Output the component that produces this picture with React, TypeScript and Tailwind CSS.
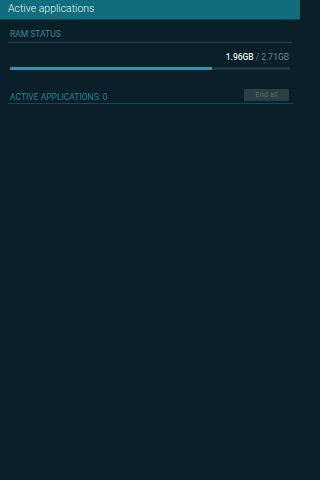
import React from "react";

export default function App() {
  return (
    <div className="w-full h-[480px] bg-[#0a1f28]">
      <div
        className="w-[300px] h-[480px] bg-[#0a1f28] flex flex-col"
        style={{ fontFamily: "Roboto, 'Liberation Sans', sans-serif" }}
      >
        <div className="h-[20px] bg-[#106d7b] flex items-center pl-[8px] border-b border-[#0d4550]">
          <span className="text-[10.5px] font-light text-[#e6f2f4] leading-none">Active applications</span>
        </div>
        <div className="px-[8px] pt-[10px]">
          <div className="pl-[2px] text-[8.5px] leading-none text-[#3b8a9b]">RAM STATUS</div>
          <div className="mt-[3px] h-px bg-[#1e4650]" />
          <div className="mt-[10px] pr-[3px] flex justify-end text-[8.5px] leading-none">
            <span className="text-[#e8eef0] font-medium">1.96GB</span>
            <span className="text-[#6d8388] ml-[2px]">/ 2.71GB</span>
          </div>
          <div className="mt-[6px] mx-[2px] h-[3px] bg-[#1b3841] flex">
            <div className="h-full bg-[#3594ad]" style={{ width: "72.3%" }} />
          </div>
          <div className="mt-[19px] flex items-end justify-between pl-[2px] pr-[3px]">
            <span className="text-[8.5px] leading-none text-[#2f7f91]">ACTIVE APPLICATIONS: 0</span>
            <div className="w-[45px] h-[12px] bg-[#293f44] flex items-center justify-center text-[7.5px] leading-none text-[#5b6f73]">
              End all
            </div>
          </div>
          <div className="mt-[2px] h-px bg-[#1e4650]" />
        </div>
      </div>
    </div>
  );
}
